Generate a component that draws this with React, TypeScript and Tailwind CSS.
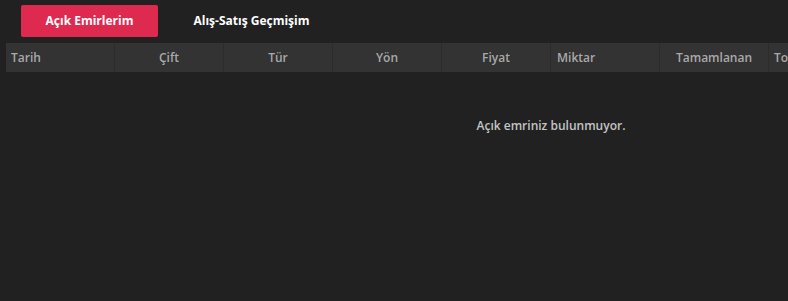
import React from "react";

const cols: { label: string; align: string }[] = [
  { label: "Tarih", align: "text-left pl-[5px]" },
  { label: "Çift", align: "text-center" },
  { label: "Tür", align: "text-center" },
  { label: "Yön", align: "text-center" },
  { label: "Fiyat", align: "text-center" },
  { label: "Miktar", align: "text-left pl-[6px]" },
  { label: "Tamamlanan", align: "text-center" },
  { label: "Toplam", align: "text-left pl-[5px]" },
  { label: "İşlem", align: "text-center" },
  { label: "", align: "text-center" },
];

export default function App() {
  return (
    <div
      className="w-[788px] h-[301px] bg-[#212121] overflow-hidden"
      style={{ fontFamily: '"Open Sans", "Noto Sans", sans-serif' }}
    >
      <div className="flex items-center pl-[21px] pt-[5px] h-[37px]">
        <button className="w-[137px] h-[32px] rounded-[2px] bg-[#df2a4f] text-white text-[12px] font-bold">
          Açık Emirlerim
        </button>
        <button className="ml-[26px] w-[135px] h-[32px] text-white text-[12px] font-bold">
          Alış-Satış Geçmişim
        </button>
      </div>
      <div className="ml-[6px] mt-[6px] w-[1090px]">
        <div className="flex h-[29px] bg-[#333333]">
          {cols.map((c, i) => (
            <div
              key={i}
              className={`w-[109px] shrink-0 h-full flex items-center border-r border-[#2c2c2c] ${
                c.align === "text-center" ? "justify-center" : "justify-start"
              } ${c.align} text-[12px] font-semibold text-[#a9a9a9] whitespace-nowrap`}
            >
              {c.label}
            </div>
          ))}
        </div>
        <div className="h-[107px] flex items-center justify-center">
          <span className="text-[12px] font-semibold text-[#c4c4c4]">
            Açık emriniz bulunmuyor.
          </span>
        </div>
      </div>
    </div>
  );
}
